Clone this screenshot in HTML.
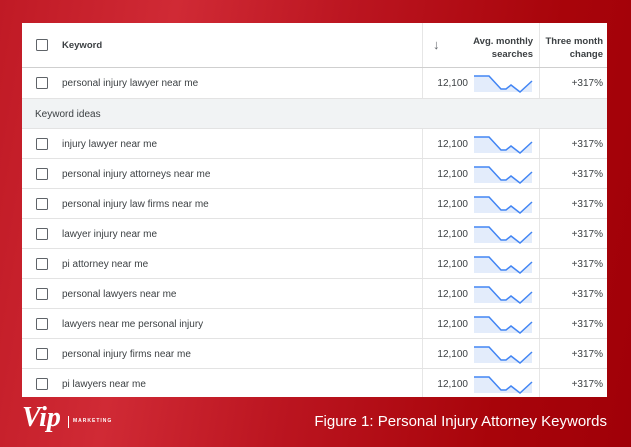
<!DOCTYPE html>
<html><head><style>
body{margin:0;width:631px;height:447px;overflow:hidden;font-family:"Liberation Sans",Arial,sans-serif;
background:linear-gradient(100deg,#c01a25 0%,#d02a35 25%,#bb1520 50%,#a8040a 80%,#a00008 100%);position:relative}
.t{position:absolute;left:22px;top:23px;width:585px;height:374px;background:#fff}
.r{position:absolute;left:0;width:585px;height:30px;border-top:1px solid #e3e3e3;box-sizing:border-box;font-size:10px;color:#3c4043}
.cb{position:absolute;left:14px;top:9px;width:10px;height:10px;border:1.5px solid #5f6368;border-radius:1.5px}
.kw{position:absolute;left:40px;top:10px}
.v{position:absolute;right:139px;top:10px}
.p{position:absolute;right:4px;top:10px}
.vl{position:absolute;top:0;bottom:0;width:1px;background:#e6e6e6}
.sp{position:absolute;left:451px;top:4px}
</style></head><body>
<div class="t">
 <div class="vl" style="left:400px"></div><div class="vl" style="left:517px"></div>
 <div class="r" style="top:0;height:45px;border:none;border-bottom:1px solid #cfcfcf;font-weight:bold;font-size:9.5px">
  <div class="cb" style="top:16px"></div><div class="kw" style="top:17px">Keyword</div>
  <div style="position:absolute;left:411px;top:14px;font-weight:normal;color:#5f6368;font-size:13px">↓</div>
  <div style="position:absolute;right:74px;top:12px;text-align:right;line-height:13px">Avg. monthly<br>searches</div>
  <div style="position:absolute;right:4px;top:12px;text-align:right;line-height:13px">Three month<br>change</div>
 </div>
 <div class="r" style="top:45px;border:none"><div class="cb"></div><div class="kw">personal injury lawyer near me</div><div class="v">12,100</div><svg class="sp" width="62" height="22"><path d="M1 4H16L28 17H33L38 13L47 20L59 9V20H1Z" fill="#e3ecfb"/><path d="M1 4H16L28 17H33L38 13L47 20L59 9" fill="none" stroke="#4285f4" stroke-width="1.5"/></svg><div class="p">+317%</div></div>
 <div class="r" style="top:75px;background:#f1f3f4;left:0;width:585px"><div style="position:absolute;left:13px;top:10px">Keyword ideas</div></div>
 <div id="rows"></div>
</div>
<div style="position:absolute;left:22px;top:404px;color:#fff;font-family:'Liberation Serif',serif;font-style:italic;font-size:28px;line-height:28px;font-weight:bold">Vip</div>
<div style="position:absolute;left:68px;top:416px;width:1px;height:12px;background:#fff"></div>
<div style="position:absolute;left:73px;top:418px;color:#fff;font-size:5px;letter-spacing:1px;font-weight:bold">MARKETING</div>
<div style="position:absolute;right:24px;top:413px;color:#fff;font-size:15px">Figure 1: Personal Injury Attorney Keywords</div>
<script>
var k=["injury lawyer near me","personal injury attorneys near me","personal injury law firms near me","lawyer injury near me","pi attorney near me","personal lawyers near me","lawyers near me personal injury","personal injury firms near me","pi lawyers near me"],h="";
k.forEach(function(s,i){h+='<div class="r" style="top:'+(105+i*30)+'px;background:transparent"><div class="cb"></div><div class="kw">'+s+'</div><div class="v">12,100</div><svg class="sp" width="62" height="22"><path d="M1 4H16L28 17H33L38 13L47 20L59 9V20H1Z" fill="#e3ecfb"/><path d="M1 4H16L28 17H33L38 13L47 20L59 9" fill="none" stroke="#4285f4" stroke-width="1.5"/></svg><div class="p">+317%</div></div>'});
document.getElementById("rows").outerHTML=h;
</script>
</body></html>
